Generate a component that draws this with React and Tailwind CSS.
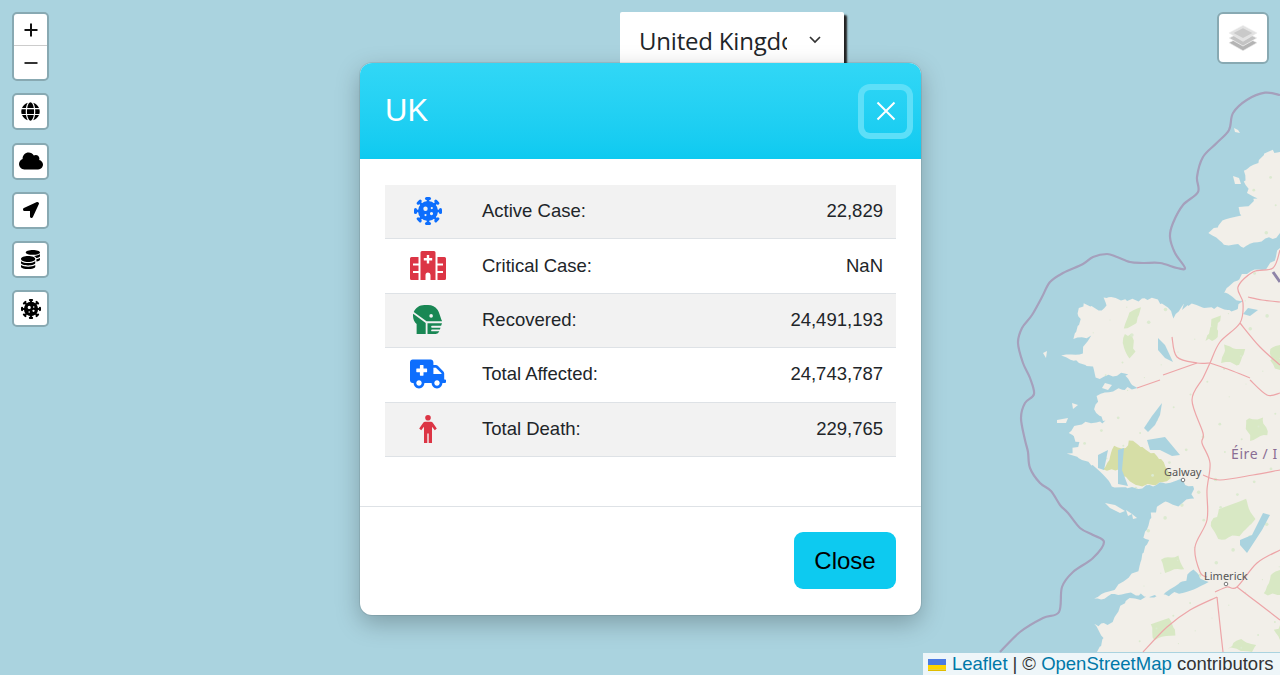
import React from "react";
import { FaGlobe, FaCloud, FaLocationArrow, FaCoins, FaHeadSideMask, FaAmbulance } from "react-icons/fa";

const parse = (s) => s.split(" ").map((p) => p.split(",").map(Number));

function smooth(s) {
  const p = parse(s);
  let d = `M${p[0][0]} ${p[0][1]}`;
  for (let i = 0; i < p.length - 1; i++) {
    const a = p[Math.max(i - 1, 0)], b = p[i], c = p[i + 1], e = p[Math.min(i + 2, p.length - 1)];
    d += `C${(b[0] + (c[0] - a[0]) / 6).toFixed(1)} ${(b[1] + (c[1] - a[1]) / 6).toFixed(1)} ${(c[0] - (e[0] - b[0]) / 6).toFixed(1)} ${(c[1] - (e[1] - b[1]) / 6).toFixed(1)} ${c[0]} ${c[1]}`;
  }
  return d;
}

function rough(s, amp = 1.6) {
  const p = parse(s);
  const out = [];
  p.forEach((a, i) => {
    const b = p[(i + 1) % p.length];
    const len = Math.hypot(b[0] - a[0], b[1] - a[1]);
    const n = Math.max(1, Math.round(len / 4));
    for (let k = 0; k < n; k++) {
      const t = k / n;
      const x = a[0] + (b[0] - a[0]) * t, y = a[1] + (b[1] - a[1]) * t;
      const onEdge = x >= 1279 || y >= 651;
      const dx = onEdge ? 0 : Math.sin(x * 1.9 + y * 0.7) * amp, dy = onEdge ? 0 : Math.cos(x * 0.8 - y * 2.3) * amp;
      out.push(`${(x + dx).toFixed(1)},${(y + dy).toFixed(1)}`);
    }
  });
  return out.join(" ");
}

const border = "1280,95 1265,92.7 1246.7,100 1233,113 1229,130 1216.7,143 1203,157 1197,177 1198,192 1183,205 1173,223 1170,237 1175,253 1185,268 1177,268 1160,263 1143,263 1130,262 1117,257 1107,254 1093,257 1083,264 1063,273 1050,282 1042,297 1032,315 1022,328 1018,343 1023,363 1030,378 1034,394 1025,403 1021,418 1025,440 1028,452 1030,468 1040,483 1051,491 1060,505 1068,513 1080,528 1093,535 1104,542 1093,558 1073,572 1062,587 1059,612 1043,618 1020,632 1000,652";
const landA = "1280,152 1267,151 1258,162 1245,168 1245,183 1248,193 1257,197 1250,205 1237,208 1240,217 1223,222 1210,232 1218,242 1233,245 1247,247 1263,240 1277,237 1280,233";
const landB = "1280,248 1275,260 1265,268 1247,273 1233,283 1223,292 1233,297 1242,302 1233,313 1223,308 1210,308 1197,305 1182,304 1175,318 1167,307 1153,298 1137,300 1120,300 1102,296 1107,307 1097,310 1085,303 1077,312 1082,320 1075,338 1090,337 1082,352 1062,357 1076,360 1092,367 1097,378 1127,373 1127,380 1137,388 1113,390 1097,397 1095,413 1107,422 1083,423 1068,432 1080,443 1068,455 1087,462 1100,470 1112,487 1137,488 1163,483 1180,480 1193,487 1193,497 1177,505 1162,502 1150,517 1142,537 1150,540 1137,570 1113,590 1093,600 1123,593 1157,597 1187,580 1193,568 1200,580 1210,583 1180,593 1127,600 1118,610 1113,623 1093,625 1102,637 1097,652 1280,652";
const lakes = [
  "1162,403 1160,415 1155,425 1148,432 1144,428 1152,416",
  "1147,440 1165,437 1180,455 1172,456 1160,450 1150,450",
  "1263,513 1270,515 1262,530 1247,553 1240,545 1240,540 1252,535",
  "1158,338 1165,345 1173,362 1165,358 1158,350",
  "1248,308 1258,310 1250,316 1243,314",
  "1118,450 1124,448 1122,470 1128,486 1118,484",
  "1098,455 1108,450 1104,470 1098,468",
  "1185,300 1189,304 1182,310",
];
const islands = [
  "1234,128 1238,130 1240,133 1235,132",
  "1233,176 1239,178 1241,184 1235,184",
  "1105,383 1112,385 1108,390 1102,388",
  "1072,403 1078,405 1073,409",
  "1057,420 1068,418 1066,423 1057,423",
  "1105,503 1115,505 1125,511 1120,513 1110,508",
  "1126,510 1132,514 1128,516",
  "1132,514 1137,518 1133,519",
  "1043,353 1047,351 1046,358",
];
const greens = [
  "1103,470 1115,446 1125,448 1130,440 1150,452 1165,462 1172,478 1160,484 1135,486 1118,470",
  "1212,318 1220,316 1216,340 1206,340",
  "1130,313 1142,308 1135,325 1125,328",
  "1125,335 1132,335 1135,352 1130,358 1123,345",
  "1220,510 1245,500 1255,520 1240,535 1218,540 1210,525",
  "1270,575 1280,570 1280,595 1265,594",
  "1160,560 1178,555 1185,568 1165,572",
  "1150,625 1170,618 1175,635 1155,640",
  "1270,350 1280,345 1280,370 1272,365",
  "1228,648 1240,640 1255,644 1252,652",
  "1275,630 1280,625 1280,640",
  "1225,345 1245,350 1240,365 1222,362",
  "1245,420 1262,418 1268,435 1250,440",
];
const speckles = Array.from({ length: 140 }, (_, i) => {
  const x = 1060 + ((i * 97.3) % 220);
  const y = 150 + ((i * 61.7) % 500);
  const r = 0.6 + ((i * 13) % 4) * 0.4;
  return [x, y, r];
});
const roads = [
  "1280,250 1273,268 1253,272 1238,287 1243,303 1240,323 1220,342 1210,363 1203,378 1192,400 1203,433 1202,443 1210,463 1207,490 1207,520 1195,547 1200,572 1207,577",
  "1248,297 1262,300 1280,302",
  "1240,323 1260,347 1280,365",
  "1210,363 1197,363 1177,357 1172,337",
  "1197,363 1163,375",
  "1210,363 1230,370 1250,378",
  "1203,475 1220,480 1253,475 1280,470",
  "1215,592 1227,587 1237,587 1257,563 1280,550",
  "1217,597 1190,610 1167,627 1143,652",
  "1217,597 1220,625 1223,652",
  "1237,587 1258,603 1280,620",
  "1160,380 1137,388",
  "1250,380 1267,395 1280,393",
];

function VirusIcon({ size, color }) {
  const spikes = [0, 45, 90, 135, 180, 225, 270, 315];
  return (
    <svg width={size} height={size} viewBox="0 0 28 28" fill={color}>
      {spikes.map((a) => (
        <g key={a} transform={`rotate(${a} 14 14)`}>
          <rect x="12.7" y="2" width="2.6" height="5" />
          <rect x="11" y="0" width="6" height="3" rx="1.5" />
        </g>
      ))}
      <path fillRule="evenodd" d="M14 4a10 10 0 1 0 0 20a10 10 0 1 0 0-20ZM11.5 9.6a2.2 2.2 0 1 1 0 4.4a2.2 2.2 0 1 1 0-4.4ZM17.5 15a1.6 1.6 0 1 1 0 3.2a1.6 1.6 0 1 1 0-3.2ZM17.8 10a1.1 1.1 0 1 1 0 2.2a1.1 1.1 0 1 1 0-2.2ZM11.5 17a1.1 1.1 0 1 1 0 2.2a1.1 1.1 0 1 1 0-2.2Z" />
    </svg>
  );
}

function HospitalIcon() {
  return (
    <svg width="36" height="29" viewBox="0 0 36 29" fill="#dc3545">
      <path fillRule="evenodd" d="M12 0H24a1.5 1.5 0 0 1 1.5 1.5V29H20.5V24a2.5 2.5 0 0 0-5 0V29H10.5V1.5A1.5 1.5 0 0 1 12 0ZM16.8 4V7H13.8V9.4H16.8V12.4H19.2V9.4H22.2V7H19.2V4Z" />
      <path d="M1.5 6H8.5V12.5H3V14.5H8.5V20H3V22H8.5V29H1.5A1.5 1.5 0 0 1 0 27.5V7.5A1.5 1.5 0 0 1 1.5 6Z" />
      <path d="M34.5 6H27.5V12.5H33V14.5H27.5V20H33V22H27.5V29H34.5A1.5 1.5 0 0 0 36 27.5V7.5A1.5 1.5 0 0 0 34.5 6Z" />
    </svg>
  );
}

function PersonIcon() {
  return (
    <svg width="18" height="28" viewBox="0 0 18 28" fill="#dc3545">
      <circle cx="9" cy="2.8" r="2.8" />
      <path d="M6 6.7H12Q13 6.7 13.6 7.5L17.8 13.5L15.8 15.3L13 11.8V28H9.7V18.5H8.3V28H5V11.8L2.2 15.3L0.2 13.5L4.4 7.5Q5 6.7 6 6.7Z" />
    </svg>
  );
}

function Ctl({ children }) {
  return <div className="w-[37px] h-[37px] bg-white border-2 border-[#88a9b2] rounded-[5px] flex flex-col items-center justify-center text-black">{children}</div>;
}

function Row({ icon, label, value, striped }) {
  return (
    <div className={"grid grid-cols-[85px_1fr_auto] items-center h-[54.4px] border-b border-[#dee2e6] text-[18.5px] text-[#212529] " + (striped ? "bg-[#f2f2f2]" : "bg-white")}>
      <div className="flex justify-center pb-[1px]">{icon}</div>
      <div className="pl-3 pb-[1px]">{label}</div>
      <div className="pr-[13px] pb-[1px]">{value}</div>
    </div>
  );
}

export default function App() {
  return (
    <div className="relative w-[1280px] h-[675px] overflow-hidden bg-[#aad3df] font-['Liberation_Sans',Arial,sans-serif]">
      <svg className="absolute inset-0" width="1280" height="675" viewBox="0 0 1280 675">
        <defs>
          <filter id="soft"><feGaussianBlur stdDeviation="0.45" /></filter>
          <clipPath id="land">
            <polygon points={rough(landA)} />
            <polygon points={rough(landB)} />
          </clipPath>
        </defs>
        <g filter="url(#soft)">
          <polygon points={rough(landA)} fill="#f2efe9" />
          <polygon points={rough(landB)} fill="#f2efe9" />
          {islands.map((p, i) => <polygon key={i} points={p} fill="#f2efe9" />)}
          <g clipPath="url(#land)">
            {greens.map((p, i) => <polygon key={i} points={rough(p, 1.2)} fill={i === 0 ? "#d6dea6" : "#d8e8c4"} />)}
            {speckles.map(([x, y, r], i) => <circle key={i} cx={x} cy={y} r={r} fill="#dcead0" />)}
          </g>
          {lakes.map((p, i) => <polygon key={i} points={p} fill="#aad3df" />)}
          {roads.map((p, i) => <path key={i} d={smooth(p)} fill="none" stroke="#eda5a8" strokeWidth="1.2" />)}
          <path d={smooth(border)} fill="none" stroke="#a5a0bc" strokeWidth="2.2" />
          <polyline points="1273,272 1280,282" fill="none" stroke="#8e84a8" strokeWidth="3" />
        </g>
        <circle cx="1183" cy="480" r="1.8" fill="#fff" stroke="#777" />
        <circle cx="1226" cy="584" r="1.8" fill="#fff" stroke="#777" />
        <text x="1164" y="476" fontFamily="Noto Sans" fontSize="11" fill="#555">Galway</text>
        <text x="1204" y="580" fontFamily="Noto Sans" fontSize="11" fill="#555">Limerick</text>
        <text x="1231" y="459" fontFamily="Noto Sans" fontSize="14" fill="#8a6d94" letterSpacing="0.6">Éire / I</text>
      </svg>

      <div className="absolute left-3 top-3 flex flex-col gap-[12.25px]">
        <div className="w-[37px] h-[69px] bg-white border-2 border-[#88a9b2] rounded-[5px] flex flex-col text-black">
          <div className="h-[32px] flex items-center justify-center border-b border-[#ccc]">
            <svg width="14" height="14" viewBox="0 0 14 14"><path d="M7 0.5V13.5M0.5 7H13.5" stroke="#111" strokeWidth="2" /></svg>
          </div>
          <div className="flex-1 flex items-center justify-center">
            <svg width="14" height="14" viewBox="0 0 14 14"><path d="M0.5 7H13.5" stroke="#333" strokeWidth="2" /></svg>
          </div>
        </div>
        <Ctl><FaGlobe size={19} /></Ctl>
        <Ctl><FaCloud size={24} /></Ctl>
        <Ctl><FaLocationArrow size={16} /></Ctl>
        <Ctl><FaCoins size={19} /></Ctl>
        <Ctl><VirusIcon size={20} color="#000" /></Ctl>
      </div>

      <div className="absolute right-[11px] top-3 w-[52px] h-[52px] bg-white border-2 border-[#88a9b2] rounded-[6px] flex items-center justify-center">
        <svg width="30" height="29" viewBox="0 0 32 30">
          <path d="M16 12L31 19.5L16 28L1 19.5Z" fill="#b4b4b4" stroke="#eee" strokeWidth="0.6" />
          <path d="M16 7L31 14.5L16 23L1 14.5Z" fill="#c4c4c4" stroke="#f4f4f4" strokeWidth="0.8" />
          <path d="M16 1L31 9L16 18L1 9Z" fill="#e2e2e2" stroke="#eee" strokeWidth="0.6" />
          <path d="M16 4L26 9L16 14.5L6 9Z" fill="#c9c9c9" />
        </svg>
      </div>

      <div className="absolute left-[620px] top-3 w-[224px] h-[60px] bg-white rounded-[2px] shadow-[3px_3px_2px_#222] flex items-start pl-[19px] pt-[9px]">
        <div className="w-[148px] overflow-hidden whitespace-nowrap font-['Open_Sans',sans-serif] text-[24px] tracking-[-0.2px] leading-[40px] text-[#212529]">United Kingdom</div>
        <svg className="ml-[21px] mt-[14px]" width="14" height="10" viewBox="0 0 14 10"><path d="M2 2L7 7L12 2" fill="none" stroke="#333" strokeWidth="1.7" /></svg>
      </div>

      <div className="relative flex pl-[360px] pt-[63px]">
        <div className="w-[561px] h-[552px] bg-white rounded-[12px] shadow-[0_0_0_1px_rgba(0,0,0,0.08),0_8px_24px_rgba(0,0,0,0.26)] flex flex-col overflow-hidden">
          <div className="h-[96px] shrink-0 bg-gradient-to-b from-[#31d7f6] to-[#0dcaf0] flex items-center justify-between pl-[25px] pr-[14px]">
            <div className="text-[31px] text-white">UK</div>
            <div className="w-[43px] h-[43px] rounded-[6px] ring-[6px] ring-[#5ddff8] flex items-center justify-center">
              <svg width="20" height="20" viewBox="0 0 20 20"><path d="M1.5 1.5L18.5 18.5M18.5 1.5L1.5 18.5" stroke="#fff" strokeWidth="2" /></svg>
            </div>
          </div>
          <div className="h-[347px] shrink-0 px-[25px] pt-[26px]">
            <Row striped label="Active Case:" value="22,829" icon={<VirusIcon size={28} color="#0d6efd" />} />
            <Row label="Critical Case:" value="NaN" icon={<HospitalIcon />} />
            <Row striped label="Recovered:" value="24,491,193" icon={<FaHeadSideMask size={29} color="#198754" />} />
            <Row label="Total Affected:" value="24,743,787" icon={<FaAmbulance size={36} color="#0d6efd" />} />
            <Row striped label="Total Death:" value="229,765" icon={<PersonIcon />} />
          </div>
          <div className="flex-1 border-t border-[#dee2e6] flex justify-end pr-[25px] pt-[25px]">
            <div className="w-[102px] h-[57px] rounded-[9px] bg-[#0dcaf0] text-black text-[24px] flex items-center justify-center">Close</div>
          </div>
        </div>
      </div>

      <div className="absolute right-0 bottom-0 w-[357px] h-[22px] bg-[#ffffffcc] flex items-center pl-[5px] whitespace-nowrap text-[18.5px] leading-[22px] text-[#333]">
        <svg className="mr-[6px] mt-[1px]" width="18" height="12" viewBox="0 0 12 8"><path fill="#4C7BE1" d="M0 0h12v4H0z" /><path fill="#FFD500" d="M0 4h12v3H0z" /><path fill="#E0BC00" d="M0 7h12v1H0z" /></svg>
        <span className="text-[#0078a8]">Leaflet</span>
        <span className="mx-[5px]">|</span>
        <span>©&nbsp;</span>
        <span className="text-[#0078a8]">OpenStreetMap</span>
        <span>&nbsp;contributors</span>
      </div>
    </div>
  );
}
